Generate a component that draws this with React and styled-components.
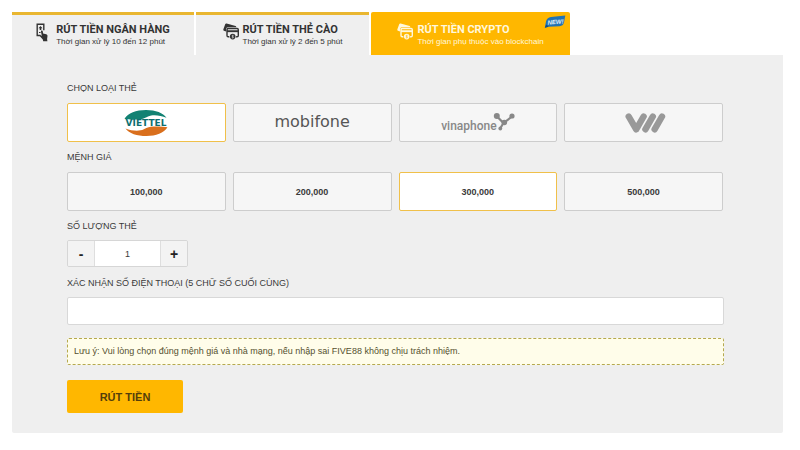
import React, { useState } from "react";
import styled, { createGlobalStyle } from "styled-components";

const GlobalStyle = createGlobalStyle`
  *, *::before, *::after { box-sizing: border-box; }
  body {
    margin: 0;
    background: #fff;
    color: #3a3a3a;
    font-family: "Liberation Sans", Arial, sans-serif;
    font-size: 9px;
  }
  button, input { font: inherit; color: inherit; }
`;

const Page = styled.main`
  padding: 12px 17px 16px 12px;
`;

const Tabs = styled.div`
  display: flex;
  gap: 2px;
  padding-right: 213px;
`;

const Tab = styled.button`
  position: relative;
  flex: ${(p) => p.$grow} 1 0;
  display: flex;
  align-items: flex-start;
  justify-content: center;
  gap: ${(p) => p.$gap}px;
  height: 43px;
  padding: 8px 0 0;
  border: 0;
  border-top: 3px solid ${(p) => (p.$active ? "#ffb700" : "#e9b630")};
  border-radius: ${(p) => (p.$active ? "2px 2px 0 0" : "0")};
  background: ${(p) => (p.$active ? "#ffb700" : "#efefef")};
  color: ${(p) => (p.$active ? "#fff8dd" : "#333")};
  text-align: left;
  white-space: nowrap;
  cursor: pointer;

  svg { flex: none; }
`;

const TabText = styled.span`
  display: flex;
  flex-direction: column;
`;

const TabTitle = styled.strong`
  font-family: Roboto, sans-serif;
  font-size: 11px;
  line-height: 13px;
`;

const TabNote = styled.span`
  font-size: 8px;
  line-height: 12px;
`;

const NewBadge = styled.span`
  position: absolute;
  top: 0;
  right: 4px;
  display: flex;
`;

const Panel = styled.form`
  padding: 25px 59px 20px 55px;
  border-radius: 0 0 2px 2px;
  background: #efefef;
`;

const Group = styled.fieldset`
  min-width: 0;
  margin: 0 0 7px;
  padding: 0;
  border: 0;
`;

const Legend = styled.legend`
  padding: 0;
  margin-bottom: 7px;
  font-size: 9px;
  line-height: 16px;
`;

const Field = styled.div`
  display: flex;
  flex-direction: column;
  align-items: stretch;
  gap: 6px;
  margin-bottom: ${(p) => p.$space}px;
`;

const FieldLabel = styled.label`
  font-size: 9px;
  line-height: 16px;
`;

const Options = styled.div`
  display: grid;
  grid-template-columns: repeat(4, 1fr);
  gap: 7px;
  padding-right: 1px;
`;

const Option = styled.label`
  position: relative;
  display: flex;
  align-items: center;
  justify-content: center;
  height: 39px;
  border: 1px solid ${(p) => (p.$selected ? "#f0c04a" : "#cdcdcd")};
  border-radius: 2px;
  background: ${(p) => (p.$selected ? "#fff" : "#f6f6f6")};
  font-weight: bold;
  cursor: pointer;
`;

const HiddenRadio = styled.input`
  position: absolute;
  inset: 0;
  margin: 0;
  opacity: 0;
  cursor: pointer;
`;

const Stepper = styled.div`
  display: grid;
  grid-template-columns: 26px 1fr 26px;
  width: 121px;
  height: 27px;
  border: 1px solid #d6d6d6;
  border-radius: 2px;
  overflow: hidden;
`;

const StepButton = styled.button`
  padding: 0;
  border: 0;
  background: #f3f3f3;
  color: #222;
  font-size: 14px;
  font-weight: bold;
  line-height: 24px;
  cursor: pointer;
`;

const Quantity = styled.input`
  min-width: 0;
  padding: 0;
  border: 0;
  border-left: 1px solid #dedede;
  border-right: 1px solid #dedede;
  background: #fff;
  text-align: center;
`;

const PhoneInput = styled.input`
  width: 100%;
  height: 28px;
  padding: 0 8px;
  border: 1px solid #d8d8d8;
  border-radius: 2px;
  background: #fff;
`;

const Notice = styled.p`
  margin: 0 0 15px;
  padding: 0 6px;
  border: 1px dashed #b5a94e;
  border-radius: 2px;
  background: #fffdea;
  color: #55502f;
  line-height: 25px;
`;

const Submit = styled.button`
  display: block;
  width: 116px;
  height: 33px;
  padding: 0;
  border: 0;
  border-radius: 2px;
  background: #ffb700;
  color: #533e0b;
  font-size: 11px;
  font-weight: bold;
  cursor: pointer;
`;

const PhoneHandIcon = () => (
  <svg width="12" height="19" viewBox="0 0 12 19" aria-hidden="true">
    <path d="M4.5 12.5H1.2V1.2h6.600v6" fill="none" stroke="currentColor" strokeWidth="1.4" />
    <path d="M4.5 3l2 2.200H5.300V7H3.700V5.200H2.500z" fill="currentColor" />
    <path d="M3 9.500h1.600" stroke="currentColor" />
    <path
      d="M5.300 7.600c.8-.4 1.400 0 1.500.8l.3 2 3 .8c1 .3 1.500.8 1.400 1.800l-.4 2.900.3 2.300H7.200l-.4-1.700-2.900-3.300c-.4-.7.3-1.300 1-.9l.9.6-.8-4.200c-.1-.5 0-.9.3-1.100z"
      fill="currentColor"
    />
  </svg>
);

const CardsIcon = ({ coin }) => (
  <svg width="16" height="17" viewBox="0 0 16 17" aria-hidden="true">
    <path
      d="M.3 6.400 2.200 1.200Q2.600.2 3.600.5l9 2.600q.8.300.6 1.100H5Q3.200 4.200 3.100 6v2.500L.9 7.700Q.1 7.300.3 6.400z"
      fill="currentColor"
    />
    <rect x="4" y="5.500" width="11.300" height="8.300" rx="1.200" fill="none" stroke="currentColor" strokeWidth="1.400" />
    <path d="M4 8.200h11.300" stroke="currentColor" strokeWidth="1.900" />
    <circle cx="9.700" cy="13.300" r="3.400" fill={coin} />
    <circle cx="9.700" cy="13.600" r="2.800" fill="currentColor" />
    <path d="M10.600 12.300H9.300v1.300h.9v1.300H8.800" fill="none" stroke={coin} strokeWidth=".7" />
  </svg>
);

const BadgeArt = () => (
  <svg width="22" height="14" viewBox="0 0 22 14" role="img" aria-label="NEW!">
    <path d="M.8 12.800 2 6.500Q2.800 2.500 7 1.900L21.300.6 20 7.600Q19.200 11 15.500 11.300L4.500 11.800z" fill="#2273b4" />
    <path d="M.8 12.800 2.200 9.500l2.500 2.300z" fill="#174d80" />
    <text
      x="11.500"
      y="9"
      textAnchor="middle"
      transform="rotate(-5 11 7)"
      fill="#e4f2fb"
      fontFamily="Liberation Sans, sans-serif"
      fontSize="6"
      fontWeight="bold"
      fontStyle="italic"
    >
      NEW!
    </text>
  </svg>
);

const ViettelLogo = () => (
  <svg width="46" height="28" viewBox="0 0 46 28" role="img" aria-label="Viettel">
    <path d="M1.500 9.800C5 4 13 1 23 1s17 2.800 20.500 7.800C37 6.300 30 5.200 25 7.600c-4.500 2.200-6 3.200-12 3-5 .1-9 0-11.500-.8z" fill="#128273" />
    <path d="M44.500 18.300C41 24.200 33 27 23.500 27 14 27 6 24.300 2.500 19.400c6.500 2.400 13.500 3.200 18.300.8 4.500-2.200 6-3 12-2.700 5 .1 9 .3 11.700.8z" fill="#d96f1d" />
    <text
      x="23"
      y="17"
      textAnchor="middle"
      fill="#0d6f70"
      fontFamily="DejaVu Sans, sans-serif"
      fontSize="9"
      fontWeight="bold"
    >
      VIETTEL
    </text>
  </svg>
);

const MobifoneLogo = styled.span`
  padding-bottom: 2px;
  color: #555;
  font-family: "DejaVu Sans", sans-serif;
  font-size: 16px;
  font-weight: normal;
  line-height: 16px;
`;

const VinaphoneLogo = styled.span`
  display: flex;
  align-items: flex-end;
  padding-bottom: 2px;
  color: #888;
  font-family: Roboto, sans-serif;
  font-size: 12px;
  font-weight: 500;
  line-height: 14px;

  svg { margin: 0 0 1px -4px; }
`;

const VinaphoneMark = () => (
  <svg width="22" height="22" viewBox="0 0 22 22" aria-hidden="true">
    <path d="M4 6.500 10.500 13 19 6.500M11 12 7.500 18" fill="none" stroke="currentColor" strokeWidth="2.200" />
    <circle cx="3.800" cy="6" r="3" fill="currentColor" />
    <circle cx="19" cy="6" r="2.600" fill="currentColor" />
    <circle cx="11.300" cy="12.500" r="2.800" fill="currentColor" />
    <circle cx="7.300" cy="18.500" r="1.900" fill="currentColor" />
  </svg>
);

const VietnamobileLogo = () => (
  <svg width="45" height="20" viewBox="-4 0 45 20" role="img" aria-label="Vietnamobile">
    <g fill="none" stroke="#999" strokeWidth="6.400" strokeLinecap="round" strokeLinejoin="round">
      <path d="M3.700 3.500 11.200 16.300 18.600 3.500" />
      <path d="M27.800 3.500 20.400 16.300" />
      <path d="M37 3.500 29.600 16.300" />
    </g>
  </svg>
);

const tabs = [
  { title: "RÚT TIỀN NGÂN HÀNG", note: "Thời gian xử lý 10 đến 12 phút", grow: 182, gap: 8, Icon: PhoneHandIcon },
  { title: "RÚT TIỀN THẺ CÀO", note: "Thời gian xử lý 2 đến 5 phút", grow: 173, gap: 4, Icon: CardsIcon },
  { title: "RÚT TIỀN CRYPTO", note: "Thời gian phụ thuộc vào blockchain", grow: 199, gap: 4, Icon: CardsIcon, isNew: true },
];

const carriers = [
  { id: "viettel", logo: <ViettelLogo /> },
  { id: "mobifone", logo: <MobifoneLogo>mobifone</MobifoneLogo> },
  { id: "vinaphone", logo: <VinaphoneLogo>vinaphone<VinaphoneMark /></VinaphoneLogo> },
  { id: "vietnamobile", logo: <VietnamobileLogo /> },
];

const amounts = ["100,000", "200,000", "300,000", "500,000"];

export default function App() {
  const [tab, setTab] = useState(2);
  const [carrier, setCarrier] = useState("viettel");
  const [amount, setAmount] = useState("300,000");
  const [quantity, setQuantity] = useState(1);

  return (
    <>
      <GlobalStyle />
      <Page>
        <Tabs role="tablist">
          {tabs.map(({ title, note, grow, gap, Icon, isNew }, i) => (
            <Tab
              key={title}
              type="button"
              role="tab"
              aria-selected={tab === i}
              $active={tab === i}
              $grow={grow}
              $gap={gap}
              onClick={() => setTab(i)}
            >
              <Icon coin={tab === i ? "#ffb700" : "#efefef"} />
              <TabText>
                <TabTitle>{title}</TabTitle>
                <TabNote>{note}</TabNote>
              </TabText>
              {isNew && <NewBadge><BadgeArt /></NewBadge>}
            </Tab>
          ))}
        </Tabs>

        <Panel onSubmit={(e) => e.preventDefault()}>
          <Group>
            <Legend>CHỌN LOẠI THẺ</Legend>
            <Options>
              {carriers.map(({ id, logo }) => (
                <Option key={id} $selected={carrier === id}>
                  <HiddenRadio type="radio" name="carrier" aria-label={id} checked={carrier === id} onChange={() => setCarrier(id)} />
                  {logo}
                </Option>
              ))}
            </Options>
          </Group>

          <Group>
            <Legend>MỆNH GIÁ</Legend>
            <Options>
              {amounts.map((value) => (
                <Option key={value} $selected={amount === value}>
                  <HiddenRadio type="radio" name="amount" checked={amount === value} onChange={() => setAmount(value)} />
                  {value}
                </Option>
              ))}
            </Options>
          </Group>

          <Field $space={8}>
            <FieldLabel htmlFor="quantity">SỐ LƯỢNG THẺ</FieldLabel>
            <Stepper>
              <StepButton type="button" onClick={() => setQuantity(Math.max(1, quantity - 1))}>-</StepButton>
              <Quantity
                id="quantity"
                inputMode="numeric"
                value={quantity}
                onChange={(e) => setQuantity(Number(e.target.value.replace(/\D/g, "")) || 1)}
              />
              <StepButton type="button" onClick={() => setQuantity(quantity + 1)}>+</StepButton>
            </Stepper>
          </Field>

          <Field $space={13}>
            <FieldLabel htmlFor="phone">XÁC NHẬN SỐ ĐIỆN THOẠI (5 CHỮ SỐ CUỐI CÙNG)</FieldLabel>
            <PhoneInput id="phone" inputMode="numeric" maxLength={5} />
          </Field>

          <Notice>
            Lưu ý: Vui lòng chọn đúng mệnh giá và nhà mạng, nếu nhập sai FIVE88 không chịu trách nhiệm.
          </Notice>

          <Submit type="submit">RÚT TIỀN</Submit>
        </Panel>
      </Page>
    </>
  );
}
